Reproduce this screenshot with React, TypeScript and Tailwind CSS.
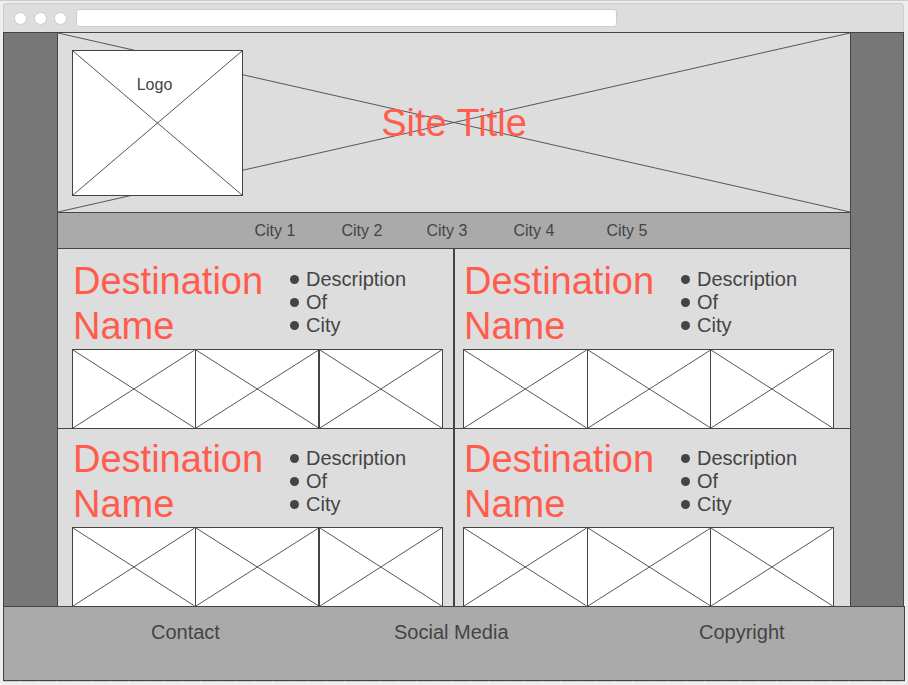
import clsx from "clsx";

function Cross({ className }: { className?: string }) {
  return (
    <svg
      className={clsx("block h-full w-full", className)}
      viewBox="0 0 100 100"
      preserveAspectRatio="none"
      fill="none"
      stroke="#555"
      strokeWidth="1"
      aria-hidden="true"
    >
      <path d="M0 0L100 100" vectorEffect="non-scaling-stroke" />
      <path d="M0 100L100 0" vectorEffect="non-scaling-stroke" />
    </svg>
  );
}

function BrowserBar() {
  return (
    <div className="flex h-[29px] items-center rounded-t border border-b-0 border-[#ccc] bg-[#ddd] pl-2.5">
      <div className="flex gap-[7px]">
        {[0, 1, 2].map((i) => (
          <span key={i} className="size-[13px] rounded-full border border-[#ccc] bg-white" />
        ))}
      </div>
      <input
        type="text"
        aria-label="Address"
        className="ml-[9px] h-[18px] w-[541px] rounded-[3px] border border-[#ccc] bg-white px-2 text-xs outline-none"
      />
    </div>
  );
}

function Header() {
  return (
    <header className="relative grid h-[179px]">
      <Cross className="absolute inset-0" />
      <div className="relative col-start-1 row-start-1 mt-[17px] ml-3.5 h-[146px] w-[171px] border border-[#444] bg-white">
        <Cross className="absolute inset-0" />
        <p className="relative pt-6 pr-1.5 text-center text-base leading-5">Logo</p>
      </div>
      <h1 className="relative col-start-1 row-start-1 place-self-center pt-0.5 text-[38px] leading-[45px] text-[#ff5c4d]">
        Site Title
      </h1>
    </header>
  );
}

function Nav() {
  return (
    <nav className="flex h-[37px] items-center justify-center border-y border-[#444] bg-[#aaa] pr-1.5">
      <ul className="grid grid-cols-[87px_85px_87px_93px_41px] text-base leading-[18px] whitespace-nowrap">
        {["City 1", "City 2", "City 3", "City 4", "City 5"].map((city) => (
          <li key={city}>
            <a href="#">{city}</a>
          </li>
        ))}
      </ul>
    </nav>
  );
}

function Card({ side, row }: { side: "left" | "right"; row: "top" | "bottom" }) {
  const left = side === "left";
  const top = row === "top";
  return (
    <section
      className={clsx(
        "border-[#444]",
        left ? "border-r pr-2.5 pl-3.5" : "border-l pr-4 pl-2",
        top ? "border-b pt-2.5" : "pt-2",
      )}
    >
      <div className="flex pl-px">
        <h2 className="w-[217px] shrink-0 text-[38px] leading-[45px] text-[#ff5c4d]">
          Destination
          <br />
          Name
        </h2>
        <ul className={clsx("text-xl leading-[23px]", top ? "pt-[9px]" : "pt-2.5")}>
          {["Description", "Of", "City"].map((item) => (
            <li key={item} className="flex items-center gap-[7px]">
              <span className="size-[9px] rounded-full bg-[#444]" />
              {item}
            </li>
          ))}
        </ul>
      </div>
      <div className="grid h-[79px] grid-cols-3">
        <div className={clsx("min-h-0 border-t border-l border-[#444] bg-white", left && "border-r")}>
          <Cross />
        </div>
        <div className={clsx("min-h-0 border-t border-[#444] bg-white", left ? "border-r" : "border-l")}>
          <Cross />
        </div>
        <div className="min-h-0 border-x border-t border-[#444] bg-white">
          <Cross />
        </div>
      </div>
    </section>
  );
}

export default function App() {
  return (
    <div className="min-h-screen border-t border-[#ccc] bg-[#eee] px-[3px] pt-0.5 font-['Liberation_Sans',Arial,sans-serif] text-[#444]">
      <div className="mr-px">
        <BrowserBar />
        <div className="flex border-x border-t border-[#444] bg-[#777]">
          <div className="w-[53px] shrink-0" />
          <main className="min-w-0 flex-1 border-x border-[#444] bg-[#ddd]">
            <Header />
            <Nav />
            <div className="grid grid-cols-2">
              <Card side="left" row="top" />
              <Card side="right" row="top" />
              <Card side="left" row="bottom" />
              <Card side="right" row="bottom" />
            </div>
          </main>
          <div className="w-[52px] shrink-0" />
        </div>
      </div>
      <footer className="grid h-[75px] grid-cols-[243fr_305fr_205fr] border border-[#444] bg-[#aaa] pt-3.5 pl-[147px] text-xl leading-[23px]">
        <a href="#">Contact</a>
        <a href="#">Social Media</a>
        <a href="#">Copyright</a>
      </footer>
      <div className="h-px bg-[repeating-linear-gradient(90deg,#ccc_0_17px,#eee_17px_18px)]" />
    </div>
  );
}
